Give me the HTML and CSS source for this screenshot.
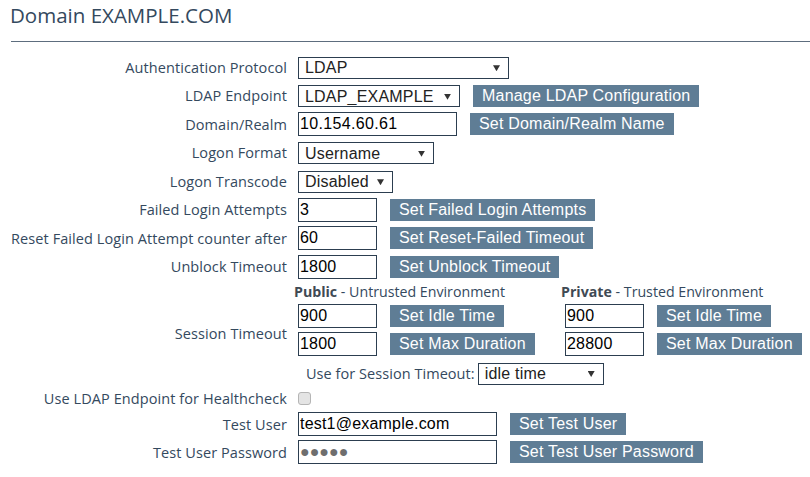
FILE: index.html
```html
<!DOCTYPE html>
<html lang="en">
<head>
<meta charset="utf-8">
<title>Domain EXAMPLE.COM</title>
<link rel="stylesheet" href="styles.css">
</head>
<body>
<div class="page">
  <h1 class="title">Domain EXAMPLE.COM</h1>
  <hr class="rule">
  <form class="form">
    <div class="row">
      <span class="lbl">Authentication Protocol</span>
      <div class="ctl">
        <span class="sel w-211"><select><option>LDAP</option></select></span>
      </div>
    </div>
    <div class="row">
      <span class="lbl">LDAP Endpoint</span>
      <div class="ctl">
        <span class="sel w-162"><select><option>LDAP_EXAMPLE</option></select></span>
        <button type="button" class="btn">Manage LDAP Configuration</button>
      </div>
    </div>
    <div class="row">
      <span class="lbl">Domain/Realm</span>
      <div class="ctl">
        <input class="txt w-159 wide-digits" type="text" value="10.154.60.61">
        <button type="button" class="btn">Set Domain/Realm Name</button>
      </div>
    </div>
    <div class="row">
      <span class="lbl">Logon Format</span>
      <div class="ctl">
        <span class="sel w-136"><select><option>Username</option></select></span>
      </div>
    </div>
    <div class="row">
      <span class="lbl">Logon Transcode</span>
      <div class="ctl">
        <span class="sel w-95"><select><option>Disabled</option></select></span>
      </div>
    </div>
    <div class="row">
      <span class="lbl">Failed Login Attempts</span>
      <div class="ctl">
        <input class="txt w-79" type="text" value="3">
        <button type="button" class="btn">Set Failed Login Attempts</button>
      </div>
    </div>
    <div class="row">
      <span class="lbl">Reset Failed Login Attempt counter after</span>
      <div class="ctl">
        <input class="txt w-79" type="text" value="60">
        <button type="button" class="btn">Set Reset-Failed Timeout</button>
      </div>
    </div>
    <div class="row">
      <span class="lbl">Unblock Timeout</span>
      <div class="ctl">
        <input class="txt w-79" type="text" value="1800">
        <button type="button" class="btn">Set Unblock Timeout</button>
      </div>
    </div>
    <div class="row row-session">
      <span class="lbl">Session Timeout</span>
      <div class="session">
        <div class="env-grid">
          <div class="env-head"><b>Public</b> - Untrusted Environment</div>
          <div class="env-head"><b>Private</b> - Trusted Environment</div>
          <div class="env-cell">
            <input class="txt w-79" type="text" value="900">
            <button type="button" class="btn">Set Idle Time</button>
          </div>
          <div class="env-cell">
            <input class="txt w-79" type="text" value="900">
            <button type="button" class="btn">Set Idle Time</button>
          </div>
          <div class="env-cell">
            <input class="txt w-79" type="text" value="1800">
            <button type="button" class="btn">Set Max Duration</button>
          </div>
          <div class="env-cell">
            <input class="txt w-79" type="text" value="28800">
            <button type="button" class="btn">Set Max Duration</button>
          </div>
        </div>
        <div class="use-for">
          <span class="use-lbl">Use for Session Timeout:</span>
          <span class="sel w-126"><select><option>idle time</option></select></span>
        </div>
      </div>
    </div>
    <div class="row row-check">
      <span class="lbl">Use LDAP Endpoint for Healthcheck</span>
      <div class="ctl">
        <input class="chk" type="checkbox">
      </div>
    </div>
    <div class="row row-user">
      <span class="lbl">Test User</span>
      <div class="ctl">
        <input class="txt w-199" type="text" value="test1@example.com">
        <button type="button" class="btn">Set Test User</button>
      </div>
    </div>
    <div class="row row-user">
      <span class="lbl">Test User Password</span>
      <div class="ctl">
        <input class="txt w-199 pwd" type="text" value="●●●●●" readonly>
        <button type="button" class="btn">Set Test User Password</button>
      </div>
    </div>
  </form>
</div>
</body>
</html>
```

FILE: styles.css
```css
* { box-sizing: border-box; }

body {
  margin: 0;
  background: #ffffff;
  color: #34495e;
  font-family: "Open Sans", "Noto Sans", sans-serif;
}

.page {
  padding-left: 10px;
}

.title {
  margin: 0;
  padding-top: 1px;
  font-size: 20.5px;
  font-weight: 400;
  line-height: 28px;
  color: #34495e;
}

.rule {
  margin: 12px 0 11px 1px;
  height: 0;
  border: 0;
  border-top: 1px solid #5d6d7e;
}

.form {
  margin: 0;
}

.row {
  display: grid;
  grid-template-columns: 277px auto;
  column-gap: 11px;
  align-items: center;
  height: 28.5px;
}

.row-session { height: 105px; }
.row-check { height: 24px; }
.row-user { height: 28px; }

.lbl {
  text-align: right;
  font-size: 14.5px;
  letter-spacing: 0.08px;
  line-height: 19px;
  white-space: nowrap;
}

.ctl {
  display: flex;
  align-items: center;
  gap: 13px;
}

/* selects */
.sel {
  position: relative;
  display: inline-block;
  height: 22px;
}
.sel select {
  appearance: none;
  -webkit-appearance: none;
  width: 100%;
  height: 22px;
  margin: 0;
  padding: 0 0 0 6px;
  border: 1px solid #2c3e50;
  border-radius: 0;
  background: #ffffff;
  color: #222222;
  font-family: "Liberation Sans", Arial, sans-serif;
  font-size: 16px;
  letter-spacing: 0.2px;
}
.sel::after {
  content: "";
  position: absolute;
  right: 9px;
  top: 9px;
  width: 7px;
  height: 6px;
  background: #333333;
  clip-path: polygon(0 0, 100% 0, 50% 100%);
  pointer-events: none;
}

.w-211 { width: 211px; }
.w-162 { width: 162px; }
.w-136 { width: 136px; }
.w-95 { width: 95px; }
.w-126 { width: 126px; }
.w-159 { width: 159px; }
.w-79 { width: 79px; }
.w-199 { width: 199px; }

/* text inputs */
.txt {
  height: 24px;
  margin: 0;
  padding: 0 1px;
  border: 1px solid #2c3e50;
  border-radius: 0;
  background: #ffffff;
  color: #000000;
  font-family: "Liberation Sans", Arial, sans-serif;
  font-size: 16px;
  letter-spacing: 0.2px;
  outline: none;
}
.wide-digits { letter-spacing: 0.35px; }
.pwd {
  color: #6e6e6e;
  letter-spacing: 0;
}

/* buttons */
.btn {
  height: 22px;
  margin: 0;
  padding: 0 9px;
  border: 0;
  border-radius: 0;
  background: #5f7d95;
  color: #ffffff;
  font-family: "Liberation Sans", Arial, sans-serif;
  font-size: 16px;
  letter-spacing: 0.2px;
  line-height: 22px;
  white-space: nowrap;
  cursor: pointer;
}

/* session timeout block */
.session {
  margin-left: -4px;
  padding-top: 1px;
  padding-bottom: 2px;
}
.env-grid {
  display: grid;
  grid-template-columns: 267px auto;
  row-gap: 4px;
}
.env-head {
  font-size: 14.2px;
  line-height: 19px;
  margin-bottom: -1px;
  white-space: nowrap;
}
.env-head b {
  font-weight: 700;
  color: #3f4a54;
}
.env-cell {
  display: flex;
  align-items: center;
  gap: 13px;
  padding-left: 4px;
  height: 24px;
}
.use-for {
  display: flex;
  align-items: center;
  gap: 3px;
  margin-top: 6px;
  padding-left: 12px;
  height: 22px;
}
.use-lbl {
  font-size: 14.5px;
  letter-spacing: 0.05px;
  line-height: 19px;
  white-space: nowrap;
}

/* checkbox */
.chk {
  appearance: none;
  -webkit-appearance: none;
  width: 13px;
  height: 13px;
  margin: 0;
  border: 1px solid #b5b5b5;
  border-radius: 3px;
  background: #e4e4e4;
}
```
